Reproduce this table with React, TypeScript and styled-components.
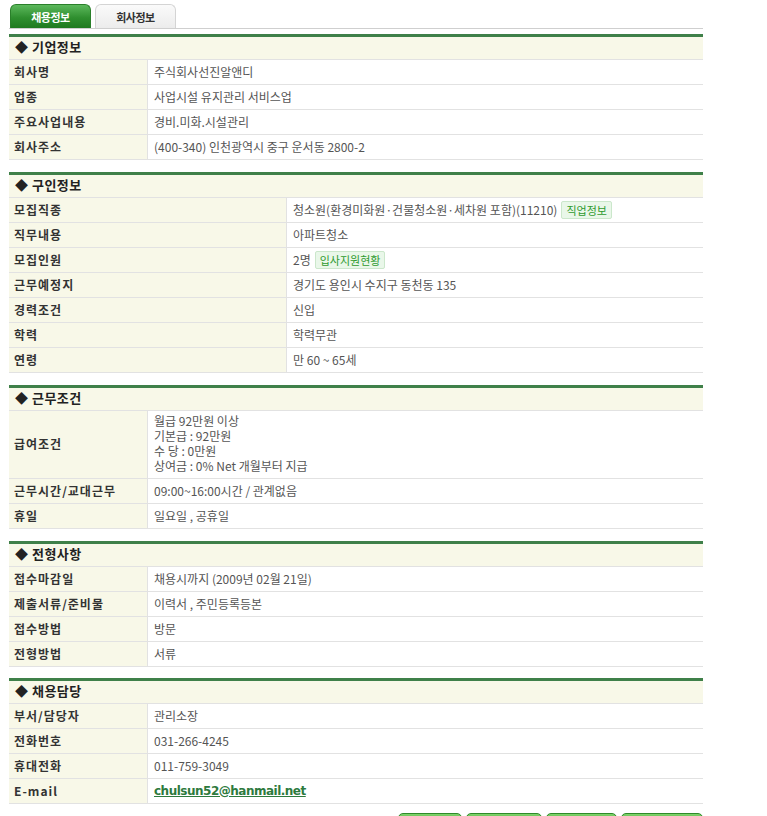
import React from "react";
import styled, { createGlobalStyle } from "styled-components";

const Global = createGlobalStyle`
  html, body { margin: 0; padding: 0; background: #fff; }
  body { font-family: "Noto Sans CJK KR", "Noto Sans", sans-serif; font-size: 12px; line-height: 14px; color: #555; }
`;

const Page = styled.div`
  width: 694px;
  padding: 4px 0 0 9px;
`;

const TabBar = styled.div`
  display: flex;
  gap: 4px;
  padding-left: 1px;
  border-bottom: 1px solid #cfcfcf;
  height: 24px;
`;

const Tab = styled.div<{ $active?: boolean }>`
  width: 81px;
  height: 24px;
  box-sizing: border-box;
  border-radius: 6px 6px 0 0;
  display: flex;
  align-items: center;
  justify-content: center;
  font-size: 11px;
  font-weight: bold;
  letter-spacing: -0.5px;
  color: ${(p) => (p.$active ? "#fff" : "#333")};
  background: ${(p) =>
    p.$active
      ? "linear-gradient(#5cb85c, #2f8f2f 55%, #1f7a1f)"
      : "linear-gradient(#fafafa, #ececec)"};
  border: 1px solid ${(p) => (p.$active ? "#2a7f2a" : "#d4d4d4")};
  border-bottom: none;
`;

const Section = styled.section<{ $gap: number }>`
  margin-top: ${(p) => p.$gap}px;
  border-top: 3px solid #3f8049;
`;

const Header = styled.div`
  box-sizing: content-box;
  background: #f8f8e8;
  border-bottom: 1px solid #e2e2e2;
  display: flex;
  align-items: center;
  padding: 0 0 2px 6px;
  height: 20px;
  font-size: 13px;
  line-height: 16px;
  font-weight: bold;
  color: #222;
  letter-spacing: 0.5px;
`;

const Grid = styled.div<{ $labelW: number }>`
  display: grid;
  grid-template-columns: ${(p) => p.$labelW}px 1fr;
`;

const Label = styled.div<{ $tall?: boolean }>`
  background: #f8f8e8;
  border-right: 1px solid #e2e2e2;
  border-bottom: 1px solid #e2e2e2;
  height: ${(p) => (p.$tall ? "auto" : "23px")};
  padding: 0 0 1px 5px;
  display: flex;
  align-items: center;
  font-weight: bold;
  color: #333;
  letter-spacing: 1px;
`;

const Value = styled.div<{ $tall?: boolean }>`
  border-bottom: 1px solid #e2e2e2;
  height: ${(p) => (p.$tall ? "auto" : "23px")};
  padding: 0 0 1px 6px;
  display: flex;
  align-items: center;
  color: #555;
  gap: 4px;
`;

const Multi = styled.div`
  padding: 2px 0 4px;
  display: flex;
  flex-direction: column;
`;

const Line = styled.div`
  height: 15px;
  line-height: 15px;
`;

const Badge = styled.span`
  display: inline-flex;
  align-items: center;
  height: 16px;
  padding: 0 4px;
  background: #e9f7e9;
  border: 1px solid #cbe7cb;
  color: #2f9a2f;
  font-size: 11px;
  border-radius: 2px;
`;

const Mail = styled.a`
  font-family: "DejaVu Sans", sans-serif;
  font-weight: bold;
  font-size: 12px;
  letter-spacing: -0.5px;
  color: #2d7a3d;
  text-decoration: underline;
`;

const Buttons = styled.div`
  display: flex;
  justify-content: flex-end;
  gap: 4px;
  margin-top: 9px;
`;

const Btn = styled.div<{ $w: number }>`
  width: ${(p) => p.$w}px;
  height: 22px;
  border-radius: 5px;
  background: linear-gradient(#7fd36b, #3fa52f 40%, #2b8f22);
  border: 1px solid #2f8a2a;
  box-sizing: border-box;
`;

type Row = { label: string; value: React.ReactNode; tall?: boolean };

function Block({
  title,
  labelW,
  rows,
  gap,
}: {
  title: string;
  labelW: number;
  rows: Row[];
  gap: number;
}) {
  return (
    <Section $gap={gap}>
      <Header>◆ {title}</Header>
      <Grid $labelW={labelW}>
        {rows.map((r) => (
          <React.Fragment key={r.label}>
            <Label $tall={r.tall}>{r.label}</Label>
            <Value $tall={r.tall}>{r.value}</Value>
          </React.Fragment>
        ))}
      </Grid>
    </Section>
  );
}

export default function App() {
  return (
    <Page>
      <Global />
      <TabBar>
        <Tab $active>채용정보</Tab>
        <Tab>회사정보</Tab>
      </TabBar>

      <Block
        gap={5}
        title="기업정보"
        labelW={139}
        rows={[
          { label: "회사명", value: "주식회사선진알앤디" },
          { label: "업종", value: "사업시설 유지관리 서비스업" },
          { label: "주요사업내용", value: "경비.미화.시설관리" },
          { label: "회사주소", value: "(400-340) 인천광역시 중구 운서동 2800-2" },
        ]}
      />

      <Block
        gap={12}
        title="구인정보"
        labelW={278}
        rows={[
          {
            label: "모집직종",
            value: (
              <>
                청소원(환경미화원·건물청소원·세차원 포함)(11210) <Badge>직업정보</Badge>
              </>
            ),
          },
          { label: "직무내용", value: "아파트청소" },
          {
            label: "모집인원",
            value: (
              <>
                2명 <Badge>입사지원현황</Badge>
              </>
            ),
          },
          { label: "근무예정지", value: "경기도 용인시 수지구 동천동 135" },
          { label: "경력조건", value: "신입" },
          { label: "학력", value: "학력무관" },
          { label: "연령", value: "만 60 ~ 65세" },
        ]}
      />

      <Block
        gap={12}
        title="근무조건"
        labelW={139}
        rows={[
          {
            label: "급여조건",
            tall: true,
            value: (
              <Multi>
                <Line>월급 92만원 이상</Line>
                <Line>기본급 : 92만원</Line>
                <Line>수 당 : 0만원</Line>
                <Line>상여금 : 0% Net 개월부터 지급</Line>
              </Multi>
            ),
          },
          { label: "근무시간/교대근무", value: "09:00~16:00시간 / 관계없음" },
          { label: "휴일", value: "일요일 , 공휴일" },
        ]}
      />

      <Block
        gap={12}
        title="전형사항"
        labelW={139}
        rows={[
          { label: "접수마감일", value: "채용시까지 (2009년 02월 21일)" },
          { label: "제출서류/준비물", value: "이력서 , 주민등록등본" },
          { label: "접수방법", value: "방문" },
          { label: "전형방법", value: "서류" },
        ]}
      />

      <Block
        gap={11}
        title="채용담당"
        labelW={139}
        rows={[
          { label: "부서/담당자", value: "관리소장" },
          { label: "전화번호", value: "031-266-4245" },
          { label: "휴대전화", value: "011-759-3049" },
          {
            label: "E-mail",
            value: <Mail href="mailto:chulsun52@hanmail.net">chulsun52@hanmail.net</Mail>,
          },
        ]}
      />

      <Buttons>
        <Btn $w={64} />
        <Btn $w={76} />
        <Btn $w={71} />
        <Btn $w={82} />
      </Buttons>
    </Page>
  );
}
